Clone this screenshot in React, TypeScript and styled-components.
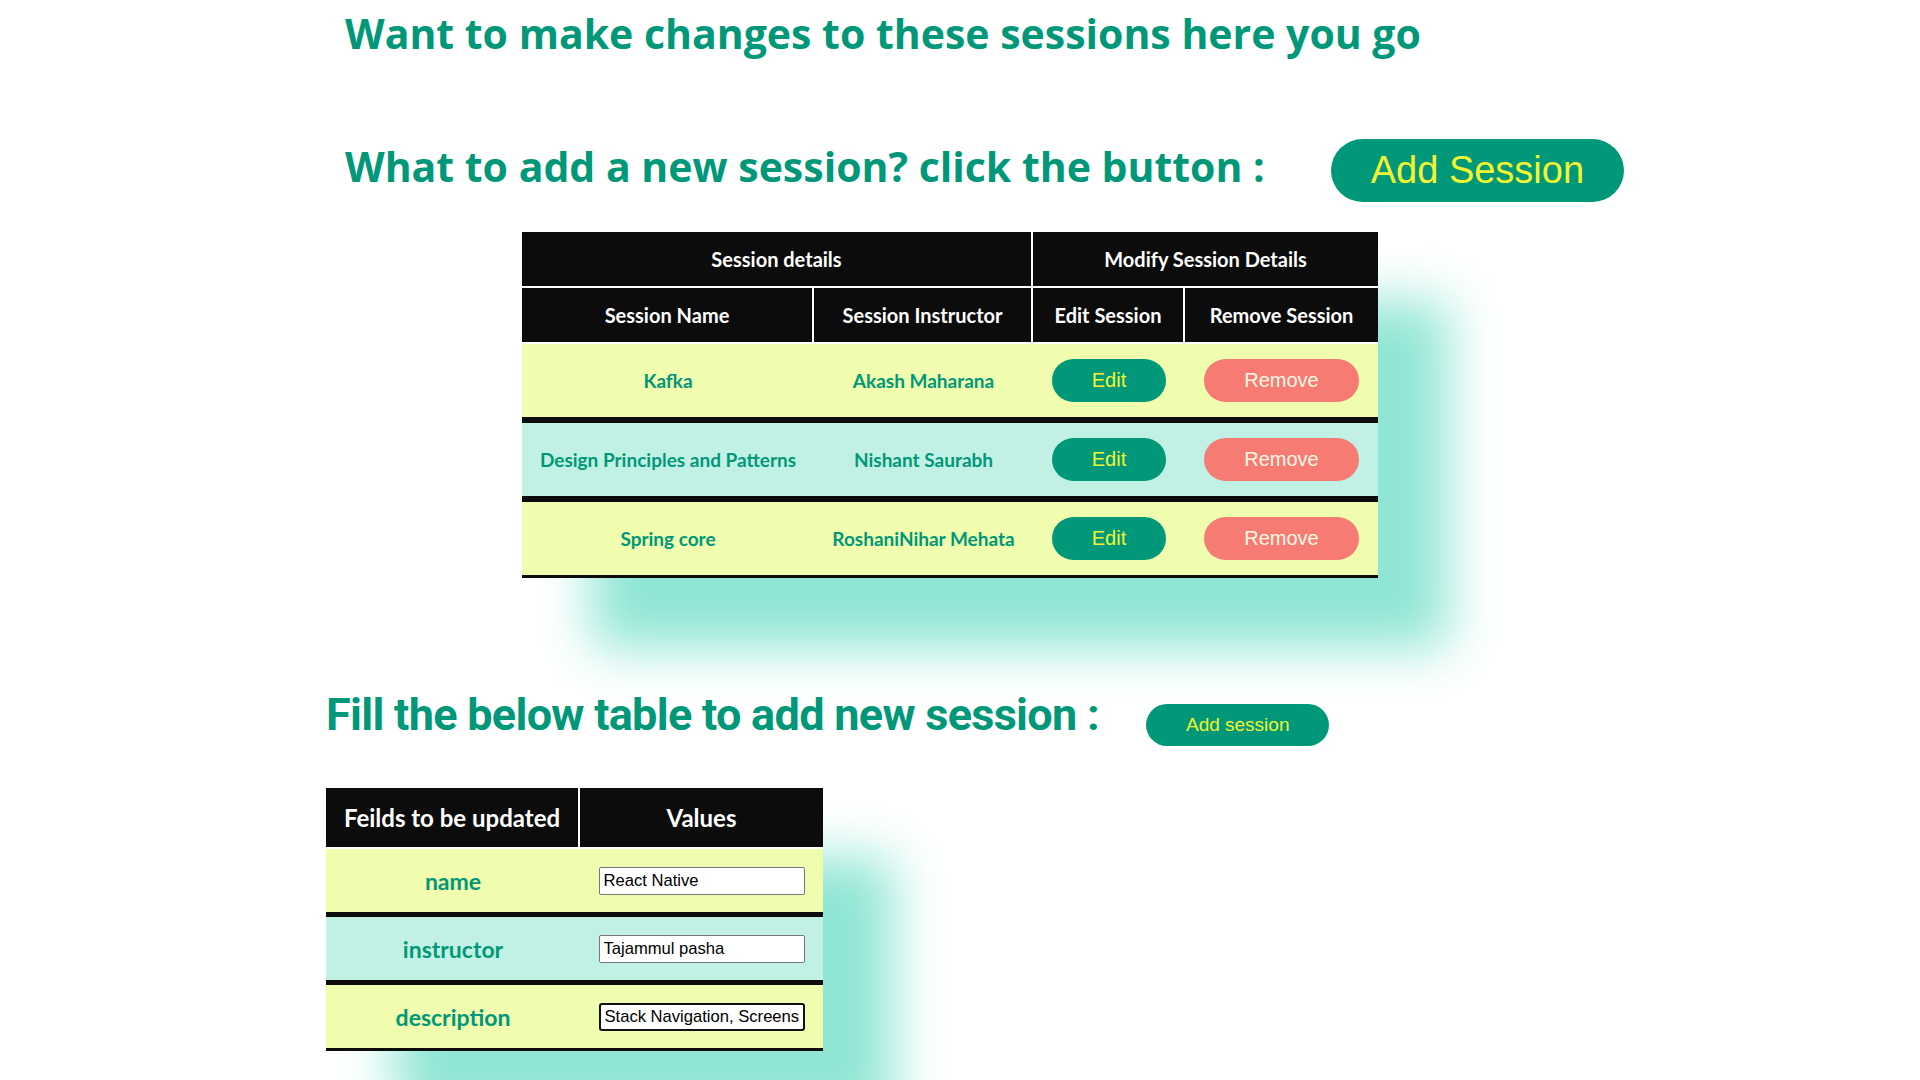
import React from 'react';
import styled, { createGlobalStyle } from 'styled-components';

const TEAL = '#009879';
const YELLOW = '#f2f530';
const SHADOW = '#8fe6d5';

const GlobalStyle = createGlobalStyle`
  html { overflow-y: scroll; }
  body {
    margin: 0;
    background: #ffffff;
    font-family: "Liberation Sans", Arial, sans-serif;
  }
`;

const Page = styled.main`
  width: 1900px;
  display: flex;
  flex-direction: column;
  padding-bottom: 60px;
`;

const Title = styled.h1`
  margin: 13px 0 0 345px;
  font-family: "Open Sans", "Noto Sans", sans-serif;
  font-weight: 700;
  font-size: 41px;
  line-height: 1;
  color: ${TEAL};
  white-space: nowrap;
`;

const ActionRow = styled.div<{ $indent: number; $gap: number; $top: number }>`
  display: flex;
  align-items: flex-start;
  gap: ${(p) => p.$gap}px;
  margin: ${(p) => p.$top}px 0 0 ${(p) => p.$indent}px;
`;

const Subtitle = styled.h2`
  margin: 7px 0 0;
  font-family: "Open Sans", "Noto Sans", sans-serif;
  font-weight: 700;
  font-size: 41px;
  line-height: 1;
  color: ${TEAL};
  white-space: nowrap;
`;

const FillTitle = styled.h2`
  margin: 0;
  font-family: Roboto, "Liberation Sans", sans-serif;
  font-weight: 700;
  font-size: 45px;
  letter-spacing: -0.7px;
  line-height: 1;
  color: ${TEAL};
  white-space: nowrap;
`;

const PillButton = styled.button<{ $size: number; $tone?: 'go' | 'danger'; $top?: number }>`
  display: inline-block;
  vertical-align: top;
  margin-top: ${(p) => p.$top ?? 0}px;
  padding: 10px 40px;
  border: none;
  border-radius: 999px;
  font-family: "Liberation Sans", Arial, sans-serif;
  font-size: ${(p) => p.$size}px;
  line-height: normal;
  background: ${(p) => (p.$tone === 'danger' ? '#f67b72' : TEAL)};
  color: ${(p) => (p.$tone === 'danger' ? '#fff8e6' : YELLOW)};
  cursor: pointer;
  white-space: nowrap;
`;

const DataTable = styled.table<{ $width: number; $center?: boolean; $top: number; $indent?: number }>`
  width: ${(p) => p.$width}px;
  margin: ${(p) => p.$top}px ${(p) => (p.$center ? 'auto' : '0')} 0
    ${(p) => (p.$center ? 'auto' : `${p.$indent ?? 0}px`)};
  border-collapse: separate;
  border-spacing: 0;
  table-layout: fixed;
  box-shadow: 70px 70px 50px ${SHADOW};
  font-family: Lato, "Open Sans", sans-serif;
`;

const Col = styled.col<{ $w: number }>`
  width: ${(p) => p.$w}px;
`;

const HeadCell = styled.th<{ $last?: boolean; $h: number; $size: number }>`
  padding: 0;
  background: #0c0c0c;
  color: #ffffff;
  font-weight: 700;
  font-size: ${(p) => p.$size}px;
  line-height: ${(p) => p.$h}px;
  text-align: center;
  border-bottom: 2px solid #ffffff;
  border-right: ${(p) => (p.$last ? 'none' : '2px solid #ffffff')};
  white-space: nowrap;
`;

const DataRow = styled.tr<{ $tint: 'lime' | 'mint' }>`
  background: ${(p) => (p.$tint === 'lime' ? '#f0fcae' : '#c0f1e4')};
`;

const DataCell = styled.td<{ $edge: number; $pad: string; $size: number; $line: number }>`
  padding: ${(p) => p.$pad};
  text-align: center;
  vertical-align: middle;
  border-bottom: ${(p) => p.$edge}px solid #0c0c0c;
  color: ${TEAL};
  font-weight: 700;
  font-size: ${(p) => p.$size}px;
  line-height: ${(p) => p.$line}px;
  white-space: nowrap;
`;

const ValueInput = styled.input<{ $focused?: boolean }>`
  box-sizing: border-box;
  vertical-align: top;
  width: 206px;
  height: 28px;
  padding: 0 4px;
  font-family: "Liberation Sans", Arial, sans-serif;
  font-size: 16.6px;
  color: #000000;
  background: #ffffff;
  border: ${(p) => (p.$focused ? '2px solid #111111' : '1px solid #767676')};
  border-radius: ${(p) => (p.$focused ? 3 : 2)}px;
  outline: none;
`;

const sessions = [
  { name: 'Kafka', instructor: 'Akash Maharana' },
  { name: 'Design Principles and Patterns', instructor: 'Nishant Saurabh' },
  { name: 'Spring core', instructor: 'RoshaniNihar Mehata' },
];

const fields = [
  { label: 'name', value: 'React Native' },
  { label: 'instructor', value: 'Tajammul pasha' },
  { label: 'description', value: 'Stack Navigation, Screens', focused: true },
];

export default function App() {
  return (
    <>
      <GlobalStyle />
      <Page>
        <Title>Want to make changes to these sessions here you go</Title>

        <ActionRow $indent={345} $gap={66} $top={85}>
          <Subtitle>What to add a new session? click the button :</Subtitle>
          <PillButton $size={38}>Add Session</PillButton>
        </ActionRow>

        <DataTable $width={856} $center $top={30}>
          <colgroup>
            <Col $w={292} />
            <Col $w={219} />
            <Col $w={152} />
            <Col $w={193} />
          </colgroup>
          <thead>
            <tr>
              <HeadCell colSpan={2} $h={54} $size={20}>
                Session details
              </HeadCell>
              <HeadCell colSpan={2} $h={54} $size={20} $last>
                Modify Session Details
              </HeadCell>
            </tr>
            <tr>
              <HeadCell $h={54} $size={20}>Session Name</HeadCell>
              <HeadCell $h={54} $size={20}>Session Instructor</HeadCell>
              <HeadCell $h={54} $size={20}>Edit Session</HeadCell>
              <HeadCell $h={54} $size={20} $last>
                Remove Session
              </HeadCell>
            </tr>
          </thead>
          <tbody>
            {sessions.map((s, i) => {
              const edge = i === sessions.length - 1 ? 3 : 6;
              return (
                <DataRow key={s.name} $tint={i % 2 === 0 ? 'lime' : 'mint'}>
                  <DataCell $edge={edge} $pad="15px 0" $size={19} $line={43}>{s.name}</DataCell>
                  <DataCell $edge={edge} $pad="15px 0" $size={19} $line={43}>{s.instructor}</DataCell>
                  <DataCell $edge={edge} $pad="15px 0" $size={19} $line={43}>
                    <PillButton $size={20}>Edit</PillButton>
                  </DataCell>
                  <DataCell $edge={edge} $pad="15px 0" $size={19} $line={43}>
                    <PillButton $size={20} $tone="danger">
                      Remove
                    </PillButton>
                  </DataCell>
                </DataRow>
              );
            })}
          </tbody>
        </DataTable>

        <ActionRow $indent={326} $gap={47} $top={114}>
          <FillTitle>Fill the below table to add new session :</FillTitle>
          <PillButton $size={19} $top={12}>
            Add session
          </PillButton>
        </ActionRow>

        <DataTable $width={497} $top={42} $indent={326}>
          <colgroup>
            <Col $w={254} />
            <Col $w={243} />
          </colgroup>
          <thead>
            <tr>
              <HeadCell $h={59} $size={24}>Feilds to be updated</HeadCell>
              <HeadCell $h={59} $size={24} $last>
                Values
              </HeadCell>
            </tr>
          </thead>
          <tbody>
            {fields.map((f, i) => {
              const edge = i === fields.length - 1 ? 3 : 5;
              return (
                <DataRow key={f.label} $tint={i % 2 === 0 ? 'lime' : 'mint'}>
                  <DataCell $edge={edge} $pad="18px 0 17px" $size={23} $line={28}>
                    {f.label}
                  </DataCell>
                  <DataCell $edge={edge} $pad="18px 0 17px" $size={23} $line={28}>
                    <ValueInput defaultValue={f.value} $focused={f.focused} />
                  </DataCell>
                </DataRow>
              );
            })}
          </tbody>
        </DataTable>
      </Page>
    </>
  );
}
